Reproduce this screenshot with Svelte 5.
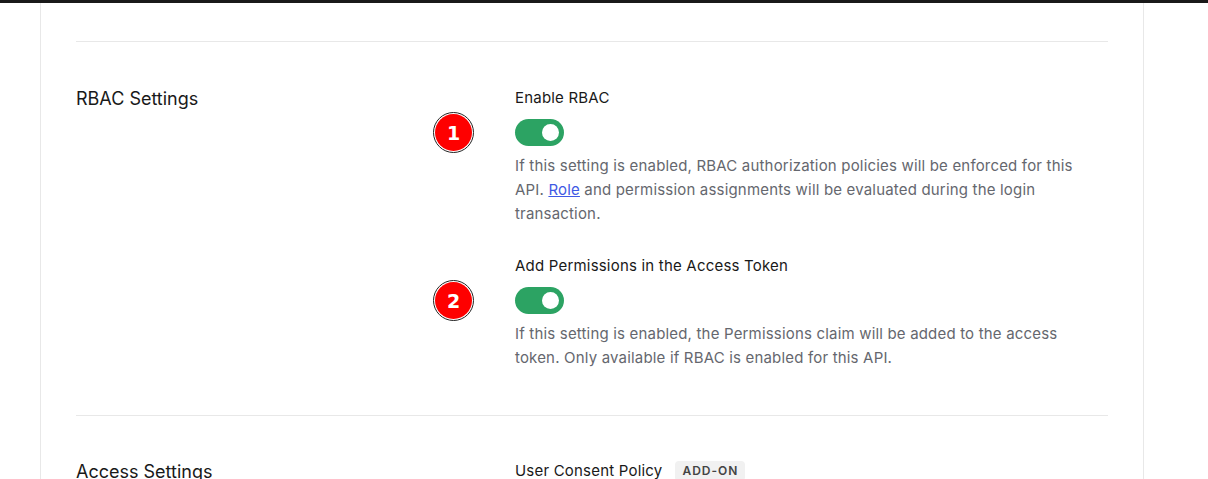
<script>
	const settings = [
		{ id: 1, label: 'Enable RBAC' },
		{ id: 2, label: 'Add Permissions in the Access Token' }
	];
</script>

<div class="page">
	<div class="topbar"></div>
	<div class="card">
		<hr />
		<section class="row rbac">
			<h3>RBAC Settings</h3>
			<div class="fields">
				{#each settings as s (s.id)}
					<div class="field">
						<div class="label">{s.label}</div>
						<div class="toggle-wrap">
							<span class="marker">
								<span class="marker-inner">{s.id}</span>
							</span>
							<span class="toggle"><span class="knob"></span></span>
						</div>
						{#if s.id === 1}
							<p>If this setting is enabled, RBAC authorization policies will be enforced for this API. <a href="#role">Role</a> and permission assignments will be evaluated during the login transaction.</p>
						{:else}
							<p>If this setting is enabled, the Permissions claim will be added to the access token. Only available if RBAC is enabled for this API.</p>
						{/if}
					</div>
				{/each}
			</div>
		</section>
		<hr />
		<section class="row access">
			<h3>Access Settings</h3>
			<div class="fields">
				<div class="label">User Consent Policy <span class="tag">ADD-ON</span></div>
			</div>
		</section>
	</div>
</div>

<style>
	:global(body) {
		background: #fff;
	}

	.page {
		height: 479px;
		overflow: hidden;
		font-family: Inter, "Liberation Sans", sans-serif;
		color: #191919;
	}

	.topbar {
		height: 3px;
		background: #191919;
	}

	.card {
		width: 1032px;
		height: 438px;
		margin-left: 40px;
		padding: 38px 35px 0;
		border-left: 1px solid #e8e8e8;
		border-right: 1px solid #e8e8e8;
	}

	hr {
		margin: 0;
		border: 0;
		border-top: 1px solid #e8e8e8;
	}

	.row {
		display: grid;
		grid-template-columns: 439px 1fr;
	}

	.rbac {
		padding: 44px 0 45px;
	}

	.access {
		padding-top: 43px;
	}

	h3 {
		margin: 1px 0 0;
		font-size: 18px;
		font-weight: 400;
		line-height: 24px;
	}

	.field + .field {
		margin-top: 28px;
	}

	.label {
		font-size: 15px;
		font-weight: 400;
		letter-spacing: 0.2px;
		line-height: 24px;
		display: flex;
		align-items: center;
	}

	.toggle-wrap {
		position: relative;
		margin-top: 9px;
		height: 28px;
	}

	.toggle {
		display: block;
		width: 49px;
		height: 27px;
		border-radius: 14px;
		background: #2ca363;
		position: relative;
	}

	.knob {
		position: absolute;
		right: 5px;
		top: 5px;
		width: 17px;
		height: 17px;
		border-radius: 50%;
		background: #fff;
	}

	.marker {
		position: absolute;
		left: -82px;
		top: -7px;
		width: 41px;
		height: 41px;
		box-sizing: border-box;
		border-radius: 50%;
		border: 1px solid #222;
		padding: 1px;
		background: #fff;
	}

	.marker-inner {
		display: flex;
		align-items: center;
		justify-content: center;
		width: 100%;
		height: 100%;
		border-radius: 50%;
		background: #fe0000;
		color: #fff;
		font-family: "DejaVu Sans", sans-serif;
		font-weight: 700;
		font-size: 19px;
		letter-spacing: 0;
	}

	p {
		margin: 7px 0 0;
		max-width: 580px;
		font-size: 15px;
		letter-spacing: 0.18px;
		line-height: 24px;
		color: #65676e;
	}

	a {
		color: #3f59e4;
		text-decoration: underline;
	}

	.tag {
		margin-left: 13px;
		padding: 0 7px;
		background: #f1f1f1;
		border-radius: 4px;
		font-size: 12px;
		font-weight: 600;
		letter-spacing: 1px;
		color: #444;
		line-height: 20px;
	}
</style>
